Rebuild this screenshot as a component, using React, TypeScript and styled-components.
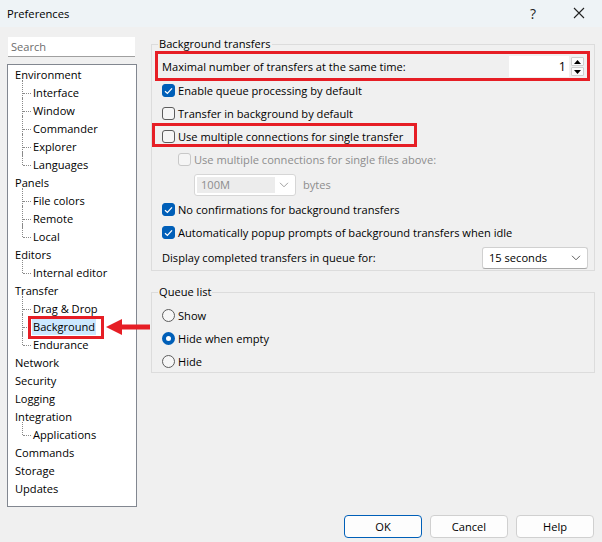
import React from "react";
import styled, { createGlobalStyle, css } from "styled-components";

const Global = createGlobalStyle`
  html, body { margin: 0; padding: 0; background: #f0f0f0; }
  * { box-sizing: border-box; }
  body { font-family: "Segoe UI", "Open Sans", "Noto Sans", sans-serif; font-size: 11.1px; color: #000; }
`;

const Window = styled.div`
  width: 602px;
  height: 542px;
  display: flex;
  flex-direction: column;
  background: #f0f0f0;
  position: relative;
  overflow: hidden;
`;

const TitleBar = styled.div`
  height: 27px;
  display: flex;
  align-items: center;
  background: #eef3f6;
  padding-left: 7px;
  padding-bottom: 1px;
`;

const Title = styled.div`
  flex: 1;
  font-size: 11.2px;
`;

const TitleButton = styled.div`
  width: 46px;
  height: 27px;
  display: flex;
  align-items: center;
  justify-content: center;
  font-size: 14px;
  color: #222;
`;

const Body = styled.div`
  flex: 1;
  display: flex;
  padding: 10px 7px 0 7px;
  gap: 14px;
`;

const LeftCol = styled.div`
  width: 130px;
  display: flex;
  flex-direction: column;
  gap: 7px;
  padding-bottom: 8px;
`;

const SearchBox = styled.div`
  margin: 0 2px 0 1px;
  height: 20px;
  background: #fff;
  border-bottom: 1px solid #a0a0a0;
  color: #6d6d6d;
  padding: 1px 3px;
  line-height: 18px;
`;

const Tree = styled.div`
  flex: 1;
  background: #fff;
  border: 1px solid #828790;
  padding: 1px 0 0 0;
`;

const TreeRow = styled.div<{ $child?: boolean; $last?: boolean }>`
  height: 18px;
  line-height: 18px;
  position: relative;
  padding-left: ${(p) => (p.$child ? "24px" : "6px")};
  white-space: nowrap;
  ${(p) =>
    p.$child &&
    css`
      &::before {
        content: "";
        position: absolute;
        left: 14px;
        top: -4px;
        height: ${p.$last ? "13px" : "22px"};
        border-left: 1px dotted #8a8a8a;
      }
      &::after {
        content: "";
        position: absolute;
        left: 15px;
        top: 9px;
        width: 8px;
        border-top: 1px dotted #8a8a8a;
      }
    `}
`;

const TreeLabel = styled.span<{ $selected?: boolean }>`
  display: inline-block;
  padding: 0 1px;
  line-height: 16px;
  ${(p) =>
    p.$selected &&
    css`
      background: #cce8ff;
    `}
`;

const RightCol = styled.div`
  flex: 1;
  display: flex;
  flex-direction: column;
  gap: 14px;
  padding-top: 0;
`;

const Group = styled.fieldset<{ $h: number }>`
  margin: 0;
  padding: 0 6px 0 6px;
  border: 1px solid #dcdcdc;
  height: ${(p) => p.$h}px;
  min-width: 0;
  width: 444px;
`;

const Legend = styled.legend`
  padding: 0 1px;
  margin-left: 0;
  line-height: 14px;
`;

const GroupContent = styled.div<{ $pt: number }>`
  display: flex;
  flex-direction: column;
  position: relative;
  padding-top: ${(p) => p.$pt}px;
`;

const Row = styled.div<{ $h?: number; $indent?: number; $gap?: number }>`
  height: ${(p) => p.$h ?? 23}px;
  display: flex;
  align-items: center;
  padding-left: ${(p) => p.$indent ?? 4}px;
  gap: ${(p) => p.$gap ?? 3}px;
  position: relative;
  white-space: nowrap;
`;

const Highlight = styled.div<{ $l: number; $t: number; $w: number; $h: number }>`
  position: absolute;
  left: ${(p) => p.$l}px;
  top: ${(p) => p.$t}px;
  width: ${(p) => p.$w}px;
  height: ${(p) => p.$h}px;
  border: 3px solid #e61e25;
  pointer-events: none;
`;

const Box = styled.span<{ $checked?: boolean; $disabled?: boolean }>`
  width: 13px;
  height: 13px;
  border-radius: 3px;
  flex: none;
  display: inline-flex;
  align-items: center;
  justify-content: center;
  border: 1px solid ${(p) => (p.$disabled ? "#c8c8c8" : p.$checked ? "#005fb8" : "#5c5c5c")};
  background: ${(p) => (p.$checked ? "#005fb8" : p.$disabled ? "#f5f5f5" : "#f6f6f6")};
`;

const Radio = styled.span<{ $checked?: boolean }>`
  width: 13px;
  height: 13px;
  border-radius: 50%;
  flex: none;
  border: ${(p) => (p.$checked ? "4px solid #005fb8" : "1px solid #5c5c5c")};
  background: ${(p) => (p.$checked ? "#fff" : "#f6f6f6")};
`;

const Label = styled.span<{ $disabled?: boolean }>`
  color: ${(p) => (p.$disabled ? "#8d8d8d" : "#000")};
`;

const Spacer = styled.div`
  flex: 1;
`;

const SpinWrap = styled.div`
  display: flex;
  align-items: center;
  gap: 2px;
  margin-right: 4px;
`;

const SpinField = styled.div`
  width: 60px;
  height: 21px;
  background: #fff;
  text-align: right;
  padding-right: 3px;
  line-height: 21px;
  font-size: 12.5px;
  color: #000;
`;

const SpinButtons = styled.div`
  display: flex;
  flex-direction: column;
  gap: 1px;
`;

const SpinBtn = styled.div`
  width: 13px;
  height: 9px;
  border: 1px solid #cfcfcf;
  background: #fbfbfb;
  border-radius: 1px;
  display: flex;
  align-items: center;
  justify-content: center;
`;

const Combo = styled.div<{ $w: number; $disabled?: boolean }>`
  width: ${(p) => p.$w}px;
  height: 22px;
  border: 1px solid ${(p) => (p.$disabled ? "#d6d6d6" : "#d0d0d0")};
  border-bottom-color: ${(p) => (p.$disabled ? "#d6d6d6" : "#a8a8a8")};
  border-radius: 3px;
  background: #fff;
  display: flex;
  align-items: center;
  padding: 2px 6px 2px 2px;
  gap: 4px;
  color: ${(p) => (p.$disabled ? "#8d8d8d" : "#000")};
`;

const ComboText = styled.div<{ $disabled?: boolean }>`
  flex: 1;
  height: 100%;
  display: flex;
  align-items: center;
  padding-left: 4px;
  background: ${(p) => (p.$disabled ? "#ececec" : "transparent")};
`;

const Footer = styled.div`
  height: 27px;
  display: flex;
  justify-content: flex-end;
  align-items: flex-start;
  gap: 8px;
  padding: 0 8px 0 0;
`;

const Button = styled.div<{ $default?: boolean }>`
  width: 78px;
  height: 23px;
  border-radius: 4px;
  background: #fdfdfd;
  border: 1px solid ${(p) => (p.$default ? "#005fb8" : "#d0d0d0")};
  display: flex;
  align-items: center;
  justify-content: center;
`;

const Arrow = styled.svg`
  position: absolute;
  left: 104px;
  top: 318px;
`;

const Check = () => (
  <svg width="9" height="8" viewBox="0 0 9 8">
    <path d="M1 4.2 L3.4 6.4 L8 1.4" fill="none" stroke="#fff" strokeWidth="1.3" />
  </svg>
);

const Chevron = ({ color = "#606060" }: { color?: string }) => (
  <svg width="10" height="6" viewBox="0 0 10 6">
    <path d="M1 0.8 L5 4.8 L9 0.8" fill="none" stroke={color} strokeWidth="1" />
  </svg>
);

const Tri = ({ up }: { up?: boolean }) => (
  <svg width="7" height="4" viewBox="0 0 7 4">
    <path d={up ? "M0 4 L3.5 0 L7 4 Z" : "M0 0 L7 0 L3.5 4 Z"} fill="#000" />
  </svg>
);

type Item = { label: string; child?: boolean; last?: boolean; selected?: boolean };

const items: Item[] = [
  { label: "Environment" },
  { label: "Interface", child: true },
  { label: "Window", child: true },
  { label: "Commander", child: true },
  { label: "Explorer", child: true },
  { label: "Languages", child: true, last: true },
  { label: "Panels" },
  { label: "File colors", child: true },
  { label: "Remote", child: true },
  { label: "Local", child: true, last: true },
  { label: "Editors" },
  { label: "Internal editor", child: true, last: true },
  { label: "Transfer" },
  { label: "Drag & Drop", child: true },
  { label: "Background", child: true, selected: true },
  { label: "Endurance", child: true, last: true },
  { label: "Network" },
  { label: "Security" },
  { label: "Logging" },
  { label: "Integration" },
  { label: "Applications", child: true, last: true },
  { label: "Commands" },
  { label: "Storage" },
  { label: "Updates" },
];

export default function App() {
  return (
    <Window>
      <Global />
      <TitleBar>
        <Title>Preferences</Title>
        <TitleButton>?</TitleButton>
        <TitleButton>
          <svg width="12" height="12" viewBox="0 0 12 12">
            <path d="M1 1 L11 11 M11 1 L1 11" stroke="#222" strokeWidth="1.1" />
          </svg>
        </TitleButton>
      </TitleBar>
      <Body>
        <LeftCol>
          <SearchBox>Search</SearchBox>
          <Tree>
            {items.map((it) => (
              <TreeRow key={it.label} $child={it.child} $last={it.last}>
                <TreeLabel $selected={it.selected}>{it.label}</TreeLabel>
              </TreeRow>
            ))}
          </Tree>
        </LeftCol>
        <RightCol>
          <Group $h={234}>
            <Legend>Background transfers</Legend>
            <GroupContent $pt={3}>
              <Row $h={25}>
                <Label>Maximal number of transfers at the same time:</Label>
                <Spacer />
                <SpinWrap>
                  <SpinField>1</SpinField>
                  <SpinButtons>
                    <SpinBtn>
                      <Tri up />
                    </SpinBtn>
                    <SpinBtn>
                      <Tri />
                    </SpinBtn>
                  </SpinButtons>
                </SpinWrap>
                <Highlight $l={-3} $t={-3} $w={435} $h={30} />
              </Row>
              <Row>
                <Box $checked>
                  <Check />
                </Box>
                <Label>Enable queue processing by default</Label>
              </Row>
              <Row>
                <Box />
                <Label>Transfer in background by default</Label>
              </Row>
              <Row>
                <Box />
                <Label>Use multiple connections for single transfer</Label>
                <Highlight $l={-6} $t={-2} $w={265} $h={24} />
              </Row>
              <Row $indent={20}>
                <Box $disabled />
                <Label $disabled>Use multiple connections for single files above:</Label>
              </Row>
              <Row $h={27} $indent={36} $gap={7}>
                <Combo $w={102} $disabled>
                  <ComboText $disabled>100M</ComboText>
                  <Chevron color="#a0a0a0" />
                </Combo>
                <Label $disabled>bytes</Label>
              </Row>
              <Row>
                <Box $checked>
                  <Check />
                </Box>
                <Label>No confirmations for background transfers</Label>
              </Row>
              <Row>
                <Box $checked>
                  <Check />
                </Box>
                <Label>Automatically popup prompts of background transfers when idle</Label>
              </Row>
              <Row $h={27}>
                <Label>Display completed transfers in queue for:</Label>
                <Spacer />
                <Combo $w={106}>
                  <ComboText>15 seconds</ComboText>
                  <Chevron />
                </Combo>
              </Row>
            </GroupContent>
          </Group>
          <Group $h={88}>
            <Legend>Queue list</Legend>
            <GroupContent $pt={5}>
              <Row>
                <Radio />
                <Label>Show</Label>
              </Row>
              <Row>
                <Radio $checked />
                <Label>Hide when empty</Label>
              </Row>
              <Row>
                <Radio />
                <Label>Hide</Label>
              </Row>
            </GroupContent>
          </Group>
        </RightCol>
      </Body>
      <Footer>
        <Button $default>OK</Button>
        <Button>Cancel</Button>
        <Button>Help</Button>
      </Footer>
      <Highlight $l={28} $t={316} $w={76} $h={23} />
      <Arrow width="46" height="18" viewBox="0 0 46 18">
        <path d="M2 9 L18 1 L18 6.5 L46 6.5 L46 11.5 L18 11.5 L18 17 Z" fill="#e61e25" />
      </Arrow>
    </Window>
  );
}
